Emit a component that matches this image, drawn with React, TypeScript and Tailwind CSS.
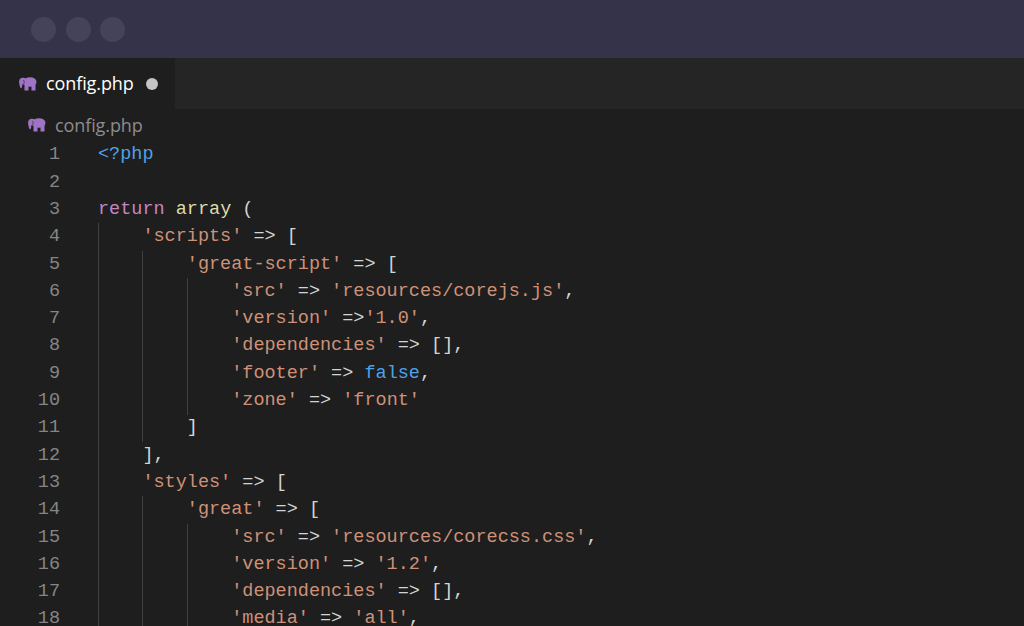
type Token = [string, string];

const P = "text-[#d4d4d4]";
const S = "text-[#ce9178]";
const B = "text-[#4fa1e8]";
const K = "text-[#c586c0]";
const F = "text-[#dcdcaa]";

const arrow = (t = " => "): Token => [t, P];

const lines: { depth: number; tokens: Token[] }[] = [
  { depth: 0, tokens: [["<?php", B]] },
  { depth: 0, tokens: [] },
  { depth: 0, tokens: [["return", K], [" ", P], ["array", F], [" (", P]] },
  { depth: 1, tokens: [["'scripts'", S], arrow(), ["[", P]] },
  { depth: 2, tokens: [["'great-script'", S], arrow(), ["[", P]] },
  { depth: 3, tokens: [["'src'", S], arrow(), ["'resources/corejs.js'", S], [",", P]] },
  { depth: 3, tokens: [["'version'", S], arrow(" =>"), ["'1.0'", S], [",", P]] },
  { depth: 3, tokens: [["'dependencies'", S], arrow(), ["[],", P]] },
  { depth: 3, tokens: [["'footer'", S], arrow(), ["false", B], [",", P]] },
  { depth: 3, tokens: [["'zone'", S], arrow(), ["'front'", S]] },
  { depth: 2, tokens: [["]", P]] },
  { depth: 1, tokens: [["],", P]] },
  { depth: 1, tokens: [["'styles'", S], arrow(), ["[", P]] },
  { depth: 2, tokens: [["'great'", S], arrow(), ["[", P]] },
  { depth: 3, tokens: [["'src'", S], arrow(), ["'resources/corecss.css'", S], [",", P]] },
  { depth: 3, tokens: [["'version'", S], arrow(), ["'1.2'", S], [",", P]] },
  { depth: 3, tokens: [["'dependencies'", S], arrow(), ["[],", P]] },
  { depth: 3, tokens: [["'media'", S], arrow(), ["'all'", S], [",", P]] },
];

function PhpIcon({ className }: { className: string }) {
  return (
    <svg viewBox="0 0 18 14" className={className} fill="#a074c4">
      <ellipse cx="11" cy="5" rx="6.500" ry="4.800" />
      <ellipse cx="4" cy="4.200" rx="3.800" ry="3.500" />
      <rect x="5.500" y="5" width="4" height="8.500" />
      <rect x="12.500" y="5" width="4" height="8.500" />
      <path d="M.3 4.500h2.800v5.500l-1 1.600-.9-1.200C.5 8.700.2 6.500.3 4.500z" />
      <path d="M3.500 7.800c2-.9 2.300-3.500.8-5" fill="none" stroke="#1e1e1e" strokeWidth=".6" />
    </svg>
  );
}

export default function App() {
  return (
    <div className="h-[626px] w-[1024px] overflow-hidden bg-[#1e1e1e]">
      {/* TITLE BAR */}
      <div className="flex h-[58px] items-center gap-[9.5px] bg-[#35334a] pl-[31px]">
        <div className="h-[25px] w-[25px] rounded-full bg-[#45435a]" />
        <div className="h-[25px] w-[25px] rounded-full bg-[#45435a]" />
        <div className="h-[25px] w-[25px] rounded-full bg-[#45435a]" />
      </div>

      {/* TABS */}
      <div className="flex h-[51px] bg-[#252526] font-['Open_Sans',sans-serif]">
        <div className="flex w-[175px] items-center bg-[#1e1e1e] pl-[19px]">
          <PhpIcon className="h-[14px] w-[18px]" />
          <span className="ml-[9px] text-[18px] tracking-[-0.1px] text-white">config.php</span>
          <div className="ml-[12px] h-[12px] w-[12px] rounded-full bg-[#c5c5c5]" />
        </div>
      </div>

      {/* BREADCRUMB */}
      <div className="flex h-[32px] items-center pl-[28px] font-['Open_Sans',sans-serif]">
        <PhpIcon className="h-[14px] w-[18px]" />
        <span className="ml-[9px] text-[18px] tracking-[-0.1px] text-[#8c8c8c]">config.php</span>
      </div>

      {/* CODE */}
      <div className="pt-[0.6px] font-['Liberation_Mono',monospace] text-[18.5px]">
        {lines.map((line, i) => (
          <div key={i} className="flex h-[27.3px] items-center whitespace-pre">
            <span className="w-[60px] text-right text-[#858585]">{i + 1}</span>
            <div className="ml-[38px] flex h-full items-center">
              {Array.from({ length: line.depth }).map((_, d) => (
                <span key={d} className="h-full w-[44.4px] border-l border-[#404040]" />
              ))}
              <span>
                {line.tokens.map(([text, color], t) => (
                  <span key={t} className={color}>
                    {text}
                  </span>
                ))}
              </span>
            </div>
          </div>
        ))}
      </div>
    </div>
  );
}
